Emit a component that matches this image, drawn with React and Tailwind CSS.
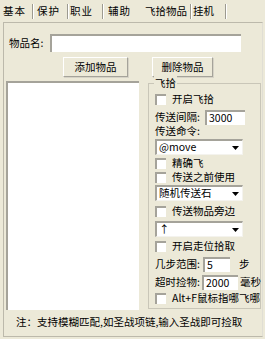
import React from "react";

const font = { fontFamily: '"Noto Sans CJK SC", "Noto Sans", sans-serif' };

function Check({ label }) {
  return (
    <div className="flex items-center h-[14px] pl-[6px] gap-[6px] whitespace-nowrap">
      <span className="w-[11px] h-[11px] bg-white border-l-2 border-t-2 border-[#a5a39a] shrink-0" />
      <span className="whitespace-nowrap">{label}</span>
    </div>
  );
}

function Combo({ value }) {
  return (
    <div className="ml-[6px] w-[88px] h-[16px] bg-white border-l-2 border-t-2 border-[#a5a39a] border-r border-b border-r-[#f4f3ee] border-b-[#f4f3ee] flex items-center">
      <span className="flex-1 pl-[2px] leading-none">{value}</span>
      <span className="w-[14px] h-full flex items-center justify-center">
        <svg width="7" height="4" viewBox="0 0 7 4"><path d="M0 0h7L3.5 4z" fill="#000" /></svg>
      </span>
    </div>
  );
}

function Field({ value, w }) {
  return (
    <div className={`h-[15px] ${w} shrink-0 bg-white border-l-2 border-t-2 border-[#a5a39a] flex items-center pl-[2px] leading-none`}>
      {value}
    </div>
  );
}

function Btn({ children, w }) {
  return (
    <div className={`${w} h-[20px] flex items-center justify-center border border-t-white border-l-white border-r-[#a5a39a] border-b-[#a5a39a] shadow-[1px_1px_0_#d6d3c7] bg-[#ece9d8]`}>
      {children}
    </div>
  );
}

function Sep() {
  return <span className="w-[2px] h-[15px] bg-[#9c9a90] border-r border-white shrink-0" />;
}

export default function App() {
  return (
    <div className="w-[265px] h-[339px] bg-[#ece9d8] text-[10.5px] text-black overflow-hidden" style={font}>
      <div className="h-[22px] flex items-center pl-[3px] whitespace-nowrap">
        <span className="tracking-[1px] w-[29px]">基本</span>
        <Sep />
        <span className="tracking-[1px] ml-[3px] w-[30px]">保护</span>
        <Sep />
        <span className="tracking-[1px] ml-[1px] w-[32px]">职业</span>
        <Sep />
        <span className="tracking-[1px] ml-[4px] w-[22px]">辅助</span>
        <span className="ml-[15px] w-[45px]">飞拾物品</span>
        <Sep />
        <span className="ml-[1px] w-[32px]">挂机</span>
        <Sep />
      </div>
      <div className="ml-[3px] mr-[2px] h-[315px] border border-[#bcb9ab] border-r-[#e0ded4] flex flex-col">
        <div className="flex items-center h-[18px] mt-[11px] pl-[5px]">
          <span className="w-[41px] whitespace-nowrap">物品名:</span>
          <div className="w-[191px] h-[18px] bg-white border-l-2 border-t-2 border-[#a5a39a]" />
        </div>
        <div className="flex h-[20px] mt-[5px] pl-[59px] gap-[24px]">
          <Btn w="w-[65px]">添加物品</Btn>
          <Btn w="w-[61px]">删除物品</Btn>
        </div>
        <div className="flex mt-[4px] h-[229px]">
          <div className="ml-[2px] w-[133px] h-[229px] bg-white border-l-2 border-t-2 border-[#a5a39a]" />
          <div className="relative ml-[9px] mt-[2px] w-[113px] h-[226px] border border-[#c9c6b8] flex flex-col">
            <span className="absolute left-[5px] top-[-8px] px-[1px] bg-[#ece9d8] leading-[14px]">飞拾</span>
            <div className="mt-[8px]"><Check label="开启飞拾" /></div>
            <div className="mt-[3px] flex items-center h-[16px] pl-[6px] whitespace-nowrap">
              <span className="w-[50px]">传送间隔:</span>
              <Field value="3000" w="w-[40px]" />
            </div>
            <div className="h-[12px] flex items-center pl-[6px] whitespace-nowrap">传送命令:</div>
            <div className="mt-[2px]"><Combo value="@move" /></div>
            <div className="mt-[1px]"><Check label="精确飞" /></div>
            <Check label="传送之前使用" />
            <div className="mt-[1px]"><Combo value="随机传送石" /></div>
            <div className="mt-[3px]"><Check label="传送物品旁边" /></div>
            <div className="mt-[3px]"><Combo value="↑" /></div>
            <div className="mt-[2px]"><Check label="开启走位拾取" /></div>
            <div className="mt-[4px] flex items-center h-[14px] pl-[6px] whitespace-nowrap">
              <span className="w-[48px] shrink-0">几步范围:</span>
              <Field value="5" w="w-[27px]" />
              <span className="ml-[9px]">步</span>
            </div>
            <div className="mt-[4px] flex items-center h-[14px] pl-[6px] whitespace-nowrap">
              <span className="w-[47px] shrink-0">超时捡物:</span>
              <Field value="2000" w="w-[36px]" />
              <span className="ml-[2px]">毫秒</span>
            </div>
            <div className="mt-[2px]"><Check label="Alt+F鼠标指哪飞哪" /></div>
          </div>
        </div>
        <div className="mt-[5px] pl-[12px] h-[14px] flex items-center whitespace-nowrap">注：支持模糊匹配,如圣战项链,输入圣战即可捡取</div>
      </div>
    </div>
  );
}
